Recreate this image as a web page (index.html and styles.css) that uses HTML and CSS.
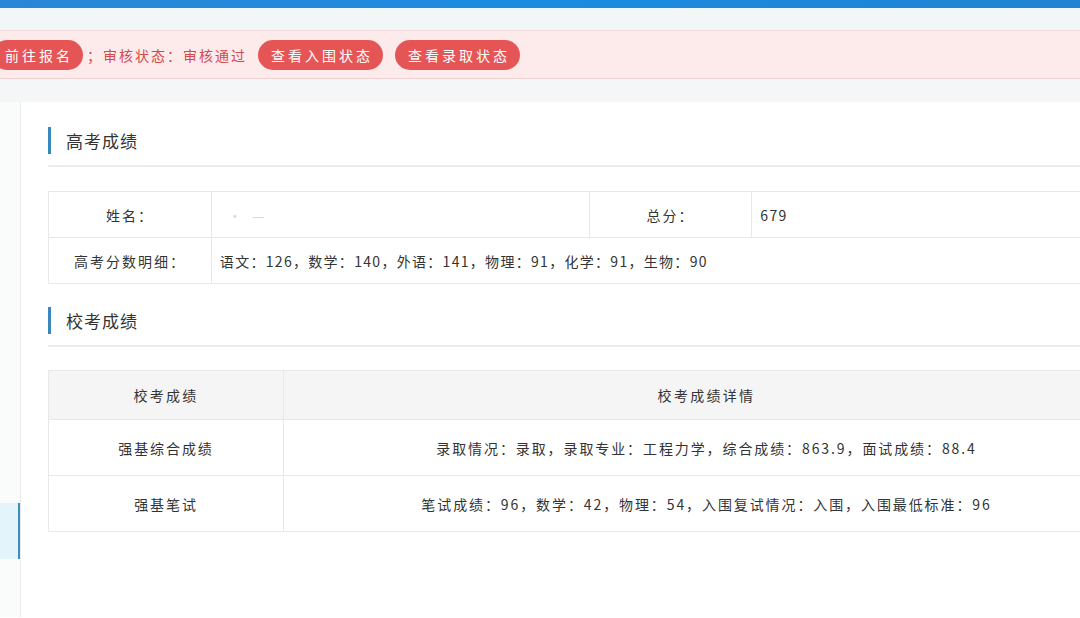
FILE: index.html
```html
<!DOCTYPE html>
<html lang="zh-CN">
<head>
    <meta charset="UTF-8">
    <meta name="viewport" content="width=device-width, initial-scale=1.0">
    <title>成绩查询</title>
    <link rel="stylesheet" href="styles.css">
</head>
<body>
    <div class="topbar"></div>
    <div class="subbar"></div>

    <div class="notice">
        <span class="pill pill-cut">前往报名</span>
        <span class="status">；审核状态：审核通过</span>
        <span class="pill">查看入围状态</span>
        <span class="pill">查看录取状态</span>
    </div>

    <div class="gap-band"></div>

    <div class="layout">
        <div class="sidebar">
            <div class="side-active"></div>
        </div>

        <div class="main">
            <div class="section-title">
                <span class="mark"></span>
                <h2>高考成绩</h2>
            </div>

            <table class="info-table">
                <colgroup>
                    <col class="c-label">
                    <col class="c-value">
                    <col class="c-label">
                    <col class="c-value">
                </colgroup>
                <tr>
                    <td class="label">姓名：</td>
                    <td class="blur">·&nbsp;&nbsp;—</td>
                    <td class="label">总分：</td>
                    <td>679</td>
                </tr>
                <tr>
                    <td class="label">高考分数明细：</td>
                    <td colspan="3">语文：126，数学：140，外语：141，物理：91，化学：91，生物：90</td>
                </tr>
            </table>

            <div class="section-title section-second">
                <span class="mark"></span>
                <h2>校考成绩</h2>
            </div>

            <table class="score-table">
                <colgroup>
                    <col class="c-name">
                    <col>
                </colgroup>
                <thead>
                    <tr>
                        <th>校考成绩</th>
                        <th>校考成绩详情</th>
                    </tr>
                </thead>
                <tbody>
                    <tr>
                        <td>强基综合成绩</td>
                        <td>录取情况：录取，录取专业：工程力学，综合成绩：863.9，面试成绩：88.4</td>
                    </tr>
                    <tr>
                        <td>强基笔试</td>
                        <td>笔试成绩：96，数学：42，物理：54，入围复试情况：入围，入围最低标准：96</td>
                    </tr>
                </tbody>
            </table>
        </div>
    </div>
</body>
</html>
```

FILE: styles.css
```css
body {
    margin: 0;
    padding: 0;
    width: 1080px;
    height: 618px;
    overflow: hidden;
    background-color: #fff;
    font-family: "Noto Sans CJK SC", "Noto Sans", sans-serif;
    color: #333;
}

.topbar {
    height: 8px;
    background: linear-gradient(90deg, #2a86d6, #1b8ce0 50%, #1f84d2);
}

.subbar {
    height: 22px;
    background-color: #f0f7f6;
    border-bottom: 1px solid #f0dcdc;
}

.notice {
    height: 47px;
    background-color: #fdeaea;
    border-bottom: 1px solid #efcfd0;
    display: flex;
    align-items: center;
    gap: 12px;
    margin-left: -8px;
}

.pill {
    background-color: #e65555;
    color: #fff;
    font-size: 14px;
    letter-spacing: 3px;
    height: 30px;
    line-height: 30px;
    padding: 0 10px 0 13px;
    border-radius: 15px;
    white-space: nowrap;
}

.pill-cut {
    margin-right: -8px;
}

.status {
    color: #d24a4a;
    font-size: 14px;
    letter-spacing: 2px;
    white-space: nowrap;
    margin-right: -1px;
}

.gap-band {
    height: 23px;
    background-color: #f5f6f7;
}

.layout {
    display: flex;
    height: 515px;
}

.sidebar {
    width: 20px;
    flex-shrink: 0;
    background-color: #fafbfb;
    border-right: 1px solid #e9ebec;
    padding-top: 401px;
}

.side-active {
    height: 56px;
    background-color: #e4f4fb;
    border-right: 2px solid #3b8dbd;
}

.main {
    padding: 25px 0 0 27px;
    width: 1082px;
    flex-shrink: 0;
}

.section-title {
    display: flex;
    align-items: center;
    gap: 15px;
    height: 27px;
    padding-bottom: 11px;
    border-bottom: 2px solid #ebeced;
    margin-bottom: 24px;
}

.section-second {
    margin-bottom: 23px;
}

.mark {
    width: 3px;
    height: 27px;
    background-color: #3a87bf;
}

.section-title h2 {
    margin: 0;
    font-size: 17px;
    font-weight: normal;
    letter-spacing: 1px;
    color: #333;
}

table {
    width: 1082px;
    border-collapse: collapse;
    font-size: 14px;
    color: #333;
    margin-bottom: 23px;
}

table, th, td {
    border: 1px solid #e8e8e8;
}

.info-table .c-label {
    width: 163px;
}

.info-table .c-value {
    width: 378px;
}

.info-table td {
    height: 45px;
    padding: 0 8px;
    letter-spacing: 1.3px;
}

.info-table td.label {
    text-align: center;
    letter-spacing: 2px;
}

.info-table td.blur {
    color: #d8d8d8;
    padding-left: 16px;
}

.score-table .c-name {
    width: 235px;
}

.score-table th {
    height: 48px;
    padding: 0;
    background-color: #f5f5f5;
    font-weight: normal;
    letter-spacing: 2.3px;
}

.score-table td {
    height: 55px;
    padding: 0;
    text-align: center;
    letter-spacing: 1.9px;
}
```
